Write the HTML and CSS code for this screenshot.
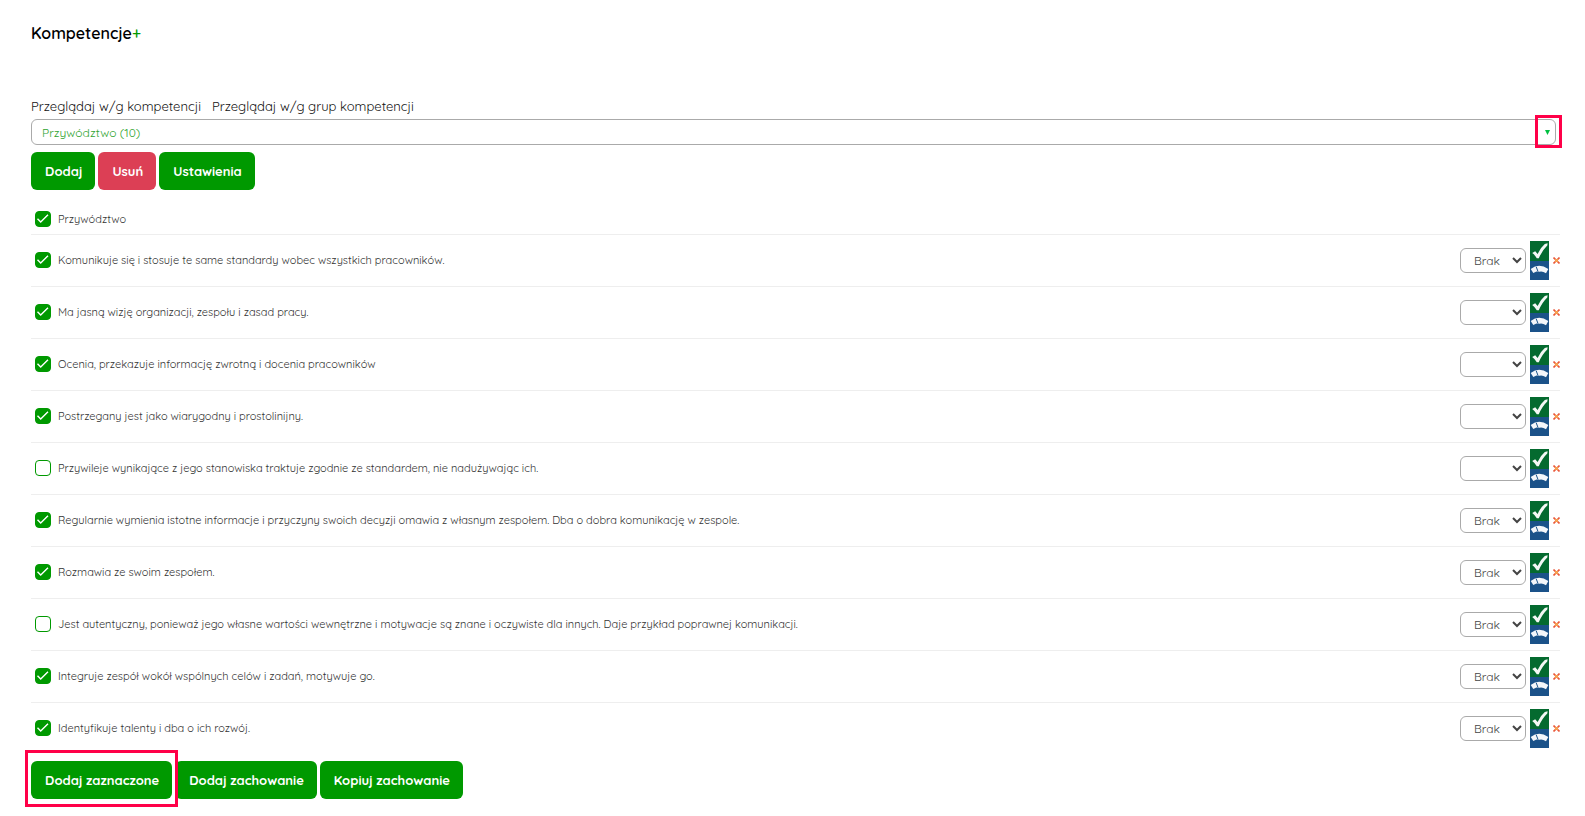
FILE: index.html
```html
<!DOCTYPE html>
<html lang="pl">
<head>
  <meta charset="UTF-8">
  <meta name="viewport" content="width=device-width, initial-scale=1.0">
  <title>Kompetencje</title>
  <link rel="stylesheet" href="styles.css">
</head>
<body>

  <!-- Shared icons -->
  <svg class="sprite" aria-hidden="true">
    <symbol id="icon-rate" viewBox="0 0 19 39">
      <rect width="19" height="20" fill="#046a2f"/>
      <rect y="20" width="19" height="19" fill="#1b5289"/>
      <path d="M2.2 12 L5.2 10.2 L7.6 13 Q10.5 6.5 14.8 3 L17.6 2.3 L17.3 4.5 Q12 9.5 8.8 17.3 L6.800 17.3 Q5 14 2.2 12 Z" fill="#f4f8f5"/>
      <path d="M0.7 28 Q9 21.500 18.3 28 L16 32.3 Q12.5 30 9.5 30.8 L6.500 30.6 L3.300 32 Z" fill="#f4f6fa"/>
      <path d="M6.200 25.800 L8 30.500" stroke="#1b5289" stroke-width="1"/>
    </symbol>
    <symbol id="icon-delete" viewBox="0 0 7 7">
      <path d="M0.5 0.5 L6.5 6.5 M6.5 0.5 L0.5 6.5" stroke="#ea5a3c" stroke-width="1.6"/>
      <path d="M2.200 2.200 L4.800 4.800 M4.800 2.200 L2.200 4.800" stroke="#f7a850" stroke-width="1.4"/>
    </symbol>
  </svg>

  <main class="page">
    <h1 class="title">Kompetencje<a href="#" class="add-link">+</a></h1>

    <!-- Filters -->
    <nav class="views">
      <a href="#">Przeglądaj w/g kompetencji</a>
      <a href="#">Przeglądaj w/g grup kompetencji</a>
    </nav>

    <div class="competence">
      <select class="competence-select" aria-label="Kompetencja">
        <option>Przywództwo (10)</option>
      </select>
      <span class="marker marker-arrow"></span>
    </div>

    <div class="buttons">
      <button type="button" class="btn">Dodaj</button>
      <button type="button" class="btn btn-danger">Usuń</button>
      <button type="button" class="btn">Ustawienia</button>
    </div>

    <!-- Behaviours -->
    <table class="behaviours">
      <thead>
        <tr>
          <th class="check"><input type="checkbox" id="all" checked></th>
          <th class="name" colspan="2"><label for="all">Przywództwo</label></th>
        </tr>
      </thead>
      <tbody>
        <tr>
          <td class="check"><input type="checkbox" id="b1" checked></td>
          <td class="name"><label for="b1">Komunikuje się i stosuje te same standardy wobec wszystkich pracowników.</label></td>
          <td><div class="tools"><select class="level" aria-label="Poziom"><option>Brak</option></select><button type="button" class="icon-btn" aria-label="Oceń"><svg class="rate"><use href="#icon-rate"/></svg></button><button type="button" class="icon-btn" aria-label="Usuń"><svg class="delete"><use href="#icon-delete"/></svg></button></div></td>
        </tr>
        <tr>
          <td class="check"><input type="checkbox" id="b2" checked></td>
          <td class="name"><label for="b2">Ma jasną wizję organizacji, zespołu i zasad pracy.</label></td>
          <td><div class="tools"><select class="level" aria-label="Poziom"><option></option></select><button type="button" class="icon-btn" aria-label="Oceń"><svg class="rate"><use href="#icon-rate"/></svg></button><button type="button" class="icon-btn" aria-label="Usuń"><svg class="delete"><use href="#icon-delete"/></svg></button></div></td>
        </tr>
        <tr>
          <td class="check"><input type="checkbox" id="b3" checked></td>
          <td class="name"><label for="b3">Ocenia, przekazuje informację zwrotną i docenia pracowników</label></td>
          <td><div class="tools"><select class="level" aria-label="Poziom"><option></option></select><button type="button" class="icon-btn" aria-label="Oceń"><svg class="rate"><use href="#icon-rate"/></svg></button><button type="button" class="icon-btn" aria-label="Usuń"><svg class="delete"><use href="#icon-delete"/></svg></button></div></td>
        </tr>
        <tr>
          <td class="check"><input type="checkbox" id="b4" checked></td>
          <td class="name"><label for="b4">Postrzegany jest jako wiarygodny i prostolinijny.</label></td>
          <td><div class="tools"><select class="level" aria-label="Poziom"><option></option></select><button type="button" class="icon-btn" aria-label="Oceń"><svg class="rate"><use href="#icon-rate"/></svg></button><button type="button" class="icon-btn" aria-label="Usuń"><svg class="delete"><use href="#icon-delete"/></svg></button></div></td>
        </tr>
        <tr>
          <td class="check"><input type="checkbox" id="b5"></td>
          <td class="name"><label for="b5">Przywileje wynikające z jego stanowiska traktuje zgodnie ze standardem, nie nadużywając ich.</label></td>
          <td><div class="tools"><select class="level" aria-label="Poziom"><option></option></select><button type="button" class="icon-btn" aria-label="Oceń"><svg class="rate"><use href="#icon-rate"/></svg></button><button type="button" class="icon-btn" aria-label="Usuń"><svg class="delete"><use href="#icon-delete"/></svg></button></div></td>
        </tr>
        <tr>
          <td class="check"><input type="checkbox" id="b6" checked></td>
          <td class="name"><label for="b6">Regularnie wymienia istotne informacje i przyczyny swoich decyzji omawia z własnym zespołem. Dba o dobra komunikację w zespole.</label></td>
          <td><div class="tools"><select class="level" aria-label="Poziom"><option>Brak</option></select><button type="button" class="icon-btn" aria-label="Oceń"><svg class="rate"><use href="#icon-rate"/></svg></button><button type="button" class="icon-btn" aria-label="Usuń"><svg class="delete"><use href="#icon-delete"/></svg></button></div></td>
        </tr>
        <tr>
          <td class="check"><input type="checkbox" id="b7" checked></td>
          <td class="name"><label for="b7">Rozmawia ze swoim zespołem.</label></td>
          <td><div class="tools"><select class="level" aria-label="Poziom"><option>Brak</option></select><button type="button" class="icon-btn" aria-label="Oceń"><svg class="rate"><use href="#icon-rate"/></svg></button><button type="button" class="icon-btn" aria-label="Usuń"><svg class="delete"><use href="#icon-delete"/></svg></button></div></td>
        </tr>
        <tr>
          <td class="check"><input type="checkbox" id="b8"></td>
          <td class="name"><label for="b8">Jest autentyczny, ponieważ jego własne wartości wewnętrzne i motywacje są znane i oczywiste dla innych. Daje przykład poprawnej komunikacji.</label></td>
          <td><div class="tools"><select class="level" aria-label="Poziom"><option>Brak</option></select><button type="button" class="icon-btn" aria-label="Oceń"><svg class="rate"><use href="#icon-rate"/></svg></button><button type="button" class="icon-btn" aria-label="Usuń"><svg class="delete"><use href="#icon-delete"/></svg></button></div></td>
        </tr>
        <tr>
          <td class="check"><input type="checkbox" id="b9" checked></td>
          <td class="name"><label for="b9">Integruje zespół wokół wspólnych celów i zadań, motywuje go.</label></td>
          <td><div class="tools"><select class="level" aria-label="Poziom"><option>Brak</option></select><button type="button" class="icon-btn" aria-label="Oceń"><svg class="rate"><use href="#icon-rate"/></svg></button><button type="button" class="icon-btn" aria-label="Usuń"><svg class="delete"><use href="#icon-delete"/></svg></button></div></td>
        </tr>
        <tr>
          <td class="check"><input type="checkbox" id="b10" checked></td>
          <td class="name"><label for="b10">Identyfikuje talenty i dba o ich rozwój.</label></td>
          <td><div class="tools"><select class="level" aria-label="Poziom"><option>Brak</option></select><button type="button" class="icon-btn" aria-label="Oceń"><svg class="rate"><use href="#icon-rate"/></svg></button><button type="button" class="icon-btn" aria-label="Usuń"><svg class="delete"><use href="#icon-delete"/></svg></button></div></td>
        </tr>
      </tbody>
    </table>

    <div class="buttons buttons-bottom">
      <div class="marked">
        <button type="button" class="btn">Dodaj zaznaczone</button>
        <span class="marker marker-button"></span>
      </div>
      <button type="button" class="btn">Dodaj zachowanie</button>
      <button type="button" class="btn">Kopiuj zachowanie</button>
    </div>
  </main>

</body>
</html>
```
FILE: styles.css
```css
* {
  box-sizing: border-box;
}

body {
  margin: 0;
  background: #fff;
  color: #111;
  font-family: Quicksand, Inter, sans-serif;
  font-size: 13px;
}

button,
select {
  font-family: inherit;
}

a {
  color: inherit;
  text-decoration: none;
}

.sprite {
  display: none;
}

.page {
  padding: 21px 25px 8px 31px;
}

.title {
  margin: 0;
  font-size: 16px;
  font-weight: 600;
  line-height: 24px;
  color: #000;
}

.add-link {
  color: #009900;
  font-weight: 500;
}

/* Filters */
.views {
  display: flex;
  gap: 11px;
  margin-top: 51px;
  line-height: 20px;
}

.competence {
  position: relative;
  margin: 3px 4px 0 0;
}

.competence-select {
  display: block;
  width: 100%;
  height: 26px;
  padding: 0 10px;
  appearance: none;
  border: 1px solid #aaa;
  border-radius: 6px;
  background: #fff url("data:image/svg+xml,%3Csvg xmlns='http://www.w3.org/2000/svg' width='5' height='5'%3E%3Cpath d='M0 0H5L2.5 5Z' fill='%2300c040'/%3E%3C/svg%3E") no-repeat right 5px center;
  color: #2fa32f;
  font-size: 12px;
}

/* Red frames that point out a control */
.marker {
  position: absolute;
  border: 3px solid #ff0048;
  pointer-events: none;
}

.marker-arrow {
  top: -4px;
  right: -6px;
  width: 27px;
  height: 33px;
}

.marker-button {
  inset: -11px -6px -8px;
}

.marked {
  position: relative;
}

/* Buttons */
.buttons {
  display: flex;
  gap: 3px;
  margin-top: 7px;
}

.buttons-bottom {
  margin-top: 7px;
}

.btn {
  height: 38px;
  padding: 0 13px 0 14px;
  border: none;
  border-radius: 6px;
  background: #009900;
  color: #fff;
  font-size: 13px;
  font-weight: 700;
  cursor: pointer;
}

.btn-danger {
  background: #dc3f55;
}

/* Behaviours list */
.behaviours {
  width: 100%;
  margin-top: 14px;
  border-collapse: collapse;
  color: #333;
  font-size: 11px;
}

.behaviours td,
.behaviours th {
  height: 52px;
  padding: 0;
  font-weight: 400;
  text-align: left;
}

.behaviours th {
  height: 30px;
}

.behaviours tbody tr {
  border-top: 1px solid #eee;
}

.behaviours .check {
  width: 27px;
  padding-left: 4px;
}

.check input {
  display: block;
  width: 16px;
  height: 16px;
  margin: 0;
  appearance: none;
  border: 1px solid #009900;
  border-radius: 4px;
  background: #fff;
}

.check input:checked {
  background: #009900 url("data:image/svg+xml,%3Csvg xmlns='http://www.w3.org/2000/svg' width='14' height='14'%3E%3Cpath d='M1.5 6.7L4.7 10L12 2.7' fill='none' stroke='white' stroke-width='1.4'/%3E%3C/svg%3E") no-repeat center;
}

.tools {
  display: flex;
  justify-content: flex-end;
  align-items: center;
  gap: 4px;
}

.level {
  width: 66px;
  height: 25px;
  padding: 0 0 0 9px;
  border: 1px solid #aaa;
  border-radius: 6px;
  background: #fff;
  color: #444;
  font-size: 12px;
}

.icon-btn {
  padding: 0;
  border: none;
  background: none;
  cursor: pointer;
}

.icon-btn svg {
  display: block;
}

.rate {
  width: 19px;
  height: 39px;
}

.delete {
  width: 7px;
  height: 7px;
}
```
